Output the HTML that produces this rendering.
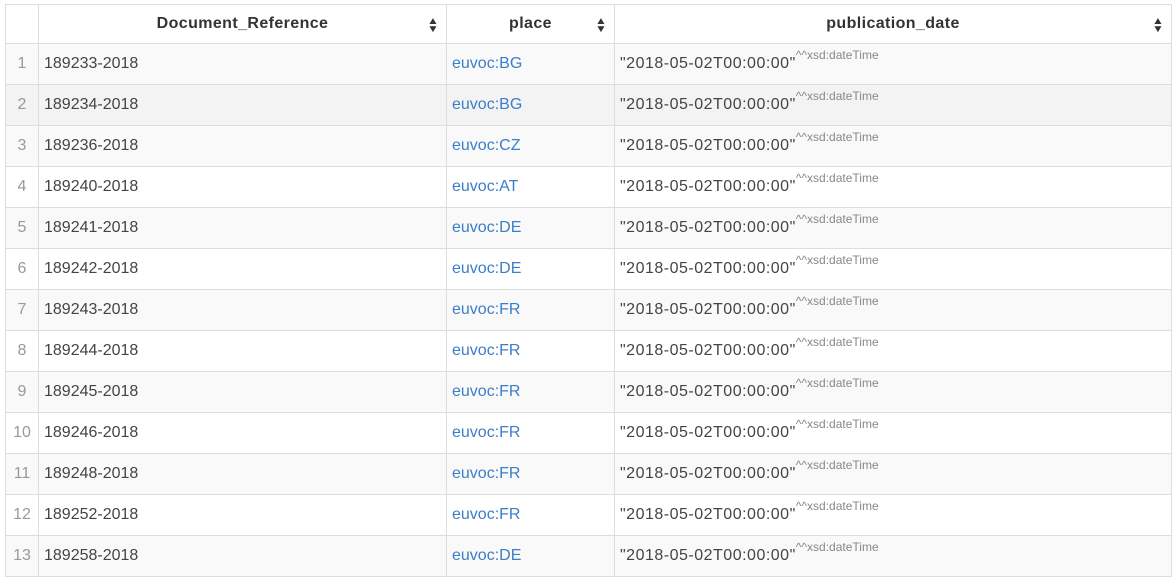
<!DOCTYPE html><html><head><style>
body{margin:0;background:#fff;font-family:"Liberation Sans",sans-serif;overflow:hidden;width:1176px;height:554px}
table{position:absolute;left:5px;top:4px;border-collapse:collapse;table-layout:fixed;width:1167px}
td,th{border:1px solid #ddd;height:40px;padding:0 5px;font-size:16px;color:#444;white-space:nowrap;overflow:hidden}
th{height:38px;font-weight:bold;text-align:center;position:relative;color:#333;letter-spacing:0.4px}
th .s{position:absolute;right:8px;top:13px;font-size:10px;line-height:8px;transform:scaleX(1.2);color:#333}
td.n{text-align:center;color:#999;padding:0}
td.d{letter-spacing:0.5px}
tr.g td{background:#f9f9f9}
tr.h td{background:#f3f3f3}
a{color:#3b7ec9;text-decoration:none}
sup{font-size:12px;color:#888;vertical-align:baseline;position:relative;top:-9px;letter-spacing:0;line-height:0}
</style></head><body><table>
<colgroup><col style="width:33px"><col style="width:408px"><col style="width:168px"><col></colgroup>
<tr><th></th><th>Document_Reference<span class="s">▲<br>▼</span></th><th>place<span class="s">▲<br>▼</span></th><th>publication_date<span class="s">▲<br>▼</span></th></tr>
<tr class="g"><td class="n">1</td><td>189233-2018</td><td><a>euvoc:BG</a></td><td class="d">"2018-05-02T00:00:00"<sup>^^xsd:dateTime</sup></td></tr>
<tr class="h"><td class="n">2</td><td>189234-2018</td><td><a>euvoc:BG</a></td><td class="d">"2018-05-02T00:00:00"<sup>^^xsd:dateTime</sup></td></tr>
<tr class="g"><td class="n">3</td><td>189236-2018</td><td><a>euvoc:CZ</a></td><td class="d">"2018-05-02T00:00:00"<sup>^^xsd:dateTime</sup></td></tr>
<tr><td class="n">4</td><td>189240-2018</td><td><a>euvoc:AT</a></td><td class="d">"2018-05-02T00:00:00"<sup>^^xsd:dateTime</sup></td></tr>
<tr class="g"><td class="n">5</td><td>189241-2018</td><td><a>euvoc:DE</a></td><td class="d">"2018-05-02T00:00:00"<sup>^^xsd:dateTime</sup></td></tr>
<tr><td class="n">6</td><td>189242-2018</td><td><a>euvoc:DE</a></td><td class="d">"2018-05-02T00:00:00"<sup>^^xsd:dateTime</sup></td></tr>
<tr class="g"><td class="n">7</td><td>189243-2018</td><td><a>euvoc:FR</a></td><td class="d">"2018-05-02T00:00:00"<sup>^^xsd:dateTime</sup></td></tr>
<tr><td class="n">8</td><td>189244-2018</td><td><a>euvoc:FR</a></td><td class="d">"2018-05-02T00:00:00"<sup>^^xsd:dateTime</sup></td></tr>
<tr class="g"><td class="n">9</td><td>189245-2018</td><td><a>euvoc:FR</a></td><td class="d">"2018-05-02T00:00:00"<sup>^^xsd:dateTime</sup></td></tr>
<tr><td class="n">10</td><td>189246-2018</td><td><a>euvoc:FR</a></td><td class="d">"2018-05-02T00:00:00"<sup>^^xsd:dateTime</sup></td></tr>
<tr class="g"><td class="n">11</td><td>189248-2018</td><td><a>euvoc:FR</a></td><td class="d">"2018-05-02T00:00:00"<sup>^^xsd:dateTime</sup></td></tr>
<tr><td class="n">12</td><td>189252-2018</td><td><a>euvoc:FR</a></td><td class="d">"2018-05-02T00:00:00"<sup>^^xsd:dateTime</sup></td></tr>
<tr class="g"><td class="n">13</td><td>189258-2018</td><td><a>euvoc:DE</a></td><td class="d">"2018-05-02T00:00:00"<sup>^^xsd:dateTime</sup></td></tr>
</table></body></html>
